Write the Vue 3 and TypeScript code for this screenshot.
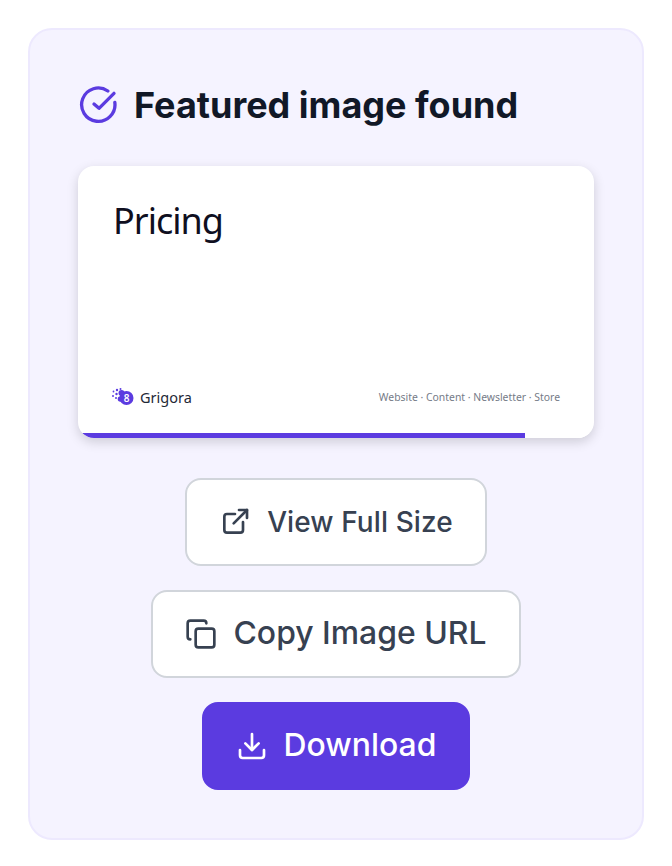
<script setup lang="ts">
const sections: string[] = ['Website', 'Content', 'Newsletter', 'Store']
</script>

<template>
  <div class="page">
    <section class="panel">
      <div class="heading">
        <svg class="check" viewBox="0 0 24 24" fill="none" stroke="currentColor" stroke-width="2" stroke-linecap="round" stroke-linejoin="round">
          <path d="M21.5 10.5a10 10 0 1 1-4.2-6.9" />
          <path d="M21 5 12 14l-3-2.6" />
        </svg>
        <h2>Featured image found</h2>
      </div>

      <div class="preview">
        <div class="preview-body">
          <div class="preview-title">Pricing</div>
          <div class="preview-foot">
            <div class="brand">
              <svg class="brand-mark" viewBox="0 0 22 18">
                <circle cx="14.5" cy="10" r="7" fill="#5b3be0" />
                <circle cx="9.5" cy="5" r="3" fill="#5b3be0" />
                <circle cx="8.5" cy="11" r="2.8" fill="#5b3be0" />
                <circle cx="5" cy="2" r="1.2" fill="#5b3be0" />
                <circle cx="1.5" cy="3.5" r="0.9" fill="#5b3be0" />
                <circle cx="4.5" cy="6" r="1.2" fill="#5b3be0" />
                <circle cx="1" cy="8" r="1" fill="#5b3be0" />
                <circle cx="4" cy="10" r="1" fill="#5b3be0" />
                <circle cx="8.5" cy="1" r="1" fill="#5b3be0" />
                <text x="14.5" y="13.5" text-anchor="middle" class="brand-digit">8</text>
              </svg>
              <span>Grigora</span>
            </div>
            <div class="links">{{ sections.join(' · ') }}</div>
          </div>
        </div>
        <div class="progress"><div class="progress-fill" :style="{ width: '86.6%' }"></div></div>
      </div>

      <div class="actions">
        <button class="btn small-label">
          <svg viewBox="0 0 24 24" fill="none" stroke="currentColor" stroke-width="2" stroke-linecap="round" stroke-linejoin="round">
            <path d="M12 6H6a2 2 0 0 0-2 2v10a2 2 0 0 0 2 2h10a2 2 0 0 0 2-2v-6" />
            <path d="M15 3h6v6" />
            <path d="M11 13 21 3" />
          </svg>
          <span>View Full Size</span>
        </button>
        <button class="btn">
          <svg viewBox="0 0 24 24" fill="none" stroke="currentColor" stroke-width="2" stroke-linecap="round" stroke-linejoin="round">
            <rect x="8" y="8" width="14" height="14" rx="2" />
            <path d="M4 16c-1.1 0-2-.9-2-2V4c0-1.1.9-2 2-2h10c1.1 0 2 .9 2 2" />
          </svg>
          <span class="label">Copy Image URL</span>
        </button>
        <button class="btn primary">
          <svg viewBox="0 0 24 24" fill="none" stroke="currentColor" stroke-width="2" stroke-linecap="round" stroke-linejoin="round">
            <path d="M21 15v4a2 2 0 0 1-2 2H5a2 2 0 0 1-2-2v-4" />
            <path d="m7 10 5 5 5-5" />
            <path d="M12 15V3" />
          </svg>
          <span class="label">Download</span>
        </button>
      </div>
    </section>
  </div>
</template>

<style scoped>
.page {
  padding: 28px;
  font-family: Inter, "Liberation Sans", sans-serif;
}
.panel {
  width: 616px;
  box-sizing: border-box;
  padding: 48px;
  background: #f5f3ff;
  border: 2px solid #ede9fe;
  border-radius: 24px;
}
.heading {
  display: flex;
  align-items: center;
  gap: 15px;
  margin: 0 0 34px 1px;
}
.check {
  width: 40px;
  height: 40px;
  color: #5b3be0;
  flex: none;
}
h2 {
  margin: 0;
  font-size: 36px;
  line-height: 54px;
  font-weight: 700;
  color: #111827;
}
.preview {
  width: 516px;
  height: 272px;
  margin: 0 auto 40px;
  background: #fff;
  border-radius: 16px;
  overflow: hidden;
  display: flex;
  flex-direction: column;
  box-shadow: 0 4px 12px rgba(0, 0, 0, 0.16);
}
.preview-body {
  flex: 1;
  display: flex;
  flex-direction: column;
  justify-content: space-between;
  padding: 32px 34px 26px;
  font-family: "Noto Sans", sans-serif;
}
.preview-title {
  margin-left: 1px;
  font-size: 36px;
  line-height: 46px;
  letter-spacing: -1px;
  color: #0f0f1f;
}
.preview-foot {
  display: flex;
  align-items: center;
  justify-content: space-between;
}
.brand {
  display: flex;
  align-items: center;
  gap: 6px;
  font-size: 14.5px;
  color: #1f2937;
}
.brand-mark {
  width: 22px;
  height: 18px;
}
.brand-digit {
  font-size: 10px;
  font-weight: 600;
  fill: #fff;
}
.links {
  font-size: 10.4px;
  color: #757b87;
}
.progress {
  height: 5px;
  background: #fff;
}
.progress-fill {
  height: 100%;
  background: #5b3be0;
}
.actions {
  display: flex;
  flex-direction: column;
  align-items: center;
  gap: 24px;
}
.btn {
  display: inline-flex;
  align-items: center;
  gap: 16px;
  height: 88px;
  box-sizing: border-box;
  padding: 0 32px;
  background: #fff;
  border: 2px solid #d1d5db;
  border-radius: 16px;
  color: #374151;
  font-family: inherit;
  font-size: 31.9px;
  font-weight: 450;
}
.btn .label {
  padding-bottom: 4px;
}
.btn.small-label {
  font-size: 28px;
  letter-spacing: 0.1px;
}
.btn svg {
  width: 32px;
  height: 32px;
  flex: none;
}
.btn.primary {
  background: #5b3be0;
  border-color: #5b3be0;
  color: #fff;
}
</style>
